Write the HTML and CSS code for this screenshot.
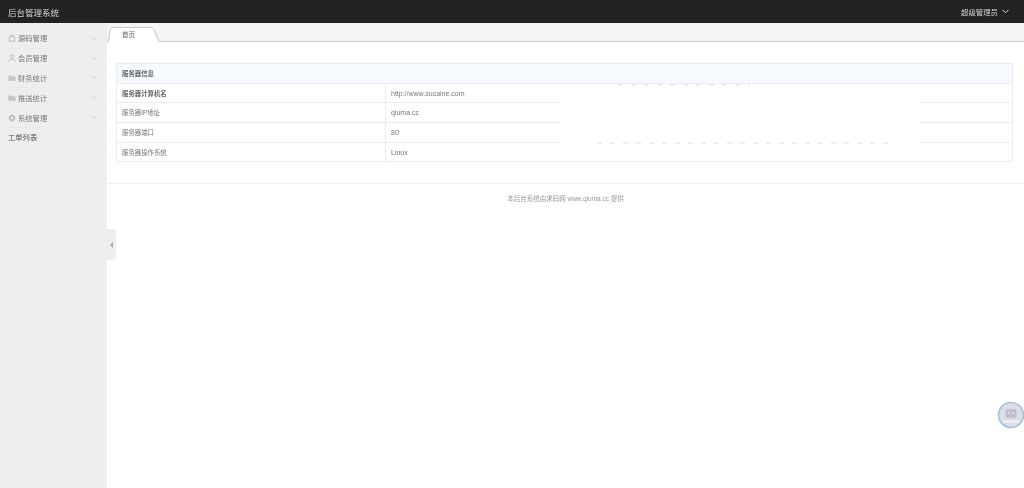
FILE: index.html
```html
<!DOCTYPE html>
<html lang="zh-CN">
<head>
<meta charset="utf-8">
<title>后台管理系统</title>
<link rel="stylesheet" href="styles.css">
</head>
<body>
<header class="topbar">
  <div class="brand">后台管理系统</div>
  <div class="user">超级管理员 <svg class="user-caret" width="7" height="5" viewBox="0 0 7 5"><path d="M.5 .8l3 3 3-3" fill="none" stroke="#ddd"/></svg></div>
</header>
<div class="body">
  <aside class="side">
    <nav class="menu">
      <a class="item"><svg class="ico" viewBox="0 0 10 10"><path d="M1.500 3.500h7v5.500h-7zM3.500 3.500V1.500h3v2" fill="none" stroke="#b4b4b4"/></svg><span class="label">源码管理</span><svg class="chev" viewBox="0 0 9 6"><path d="M1 1l3.500 3.500L8 1" fill="none" stroke="#c8c8c8"/></svg></a>
      <a class="item"><svg class="ico" viewBox="0 0 10 10"><circle cx="5" cy="3" r="2" fill="none" stroke="#b4b4b4"/><path d="M1 9.500c0-2.500 2-3 4-3s4 .5 4 3" fill="none" stroke="#b4b4b4"/></svg><span class="label">会员管理</span><svg class="chev" viewBox="0 0 9 6"><path d="M1 1l3.500 3.500L8 1" fill="none" stroke="#c8c8c8"/></svg></a>
      <a class="item"><svg class="ico" viewBox="0 0 10 10"><path d="M.5 2h3.500l1 1h4.500v5.500h-9z" fill="#c4c4c4"/></svg><span class="label">财务统计</span><svg class="chev" viewBox="0 0 9 6"><path d="M1 1l3.500 3.500L8 1" fill="none" stroke="#c8c8c8"/></svg></a>
      <a class="item"><svg class="ico" viewBox="0 0 10 10"><path d="M.5 2h3.500l1 1h4.500v5.500h-9z" fill="#c4c4c4"/></svg><span class="label">推送统计</span><svg class="chev" viewBox="0 0 9 6"><path d="M1 1l3.500 3.500L8 1" fill="none" stroke="#c8c8c8"/></svg></a>
      <a class="item"><svg class="ico" viewBox="0 0 10 10"><circle cx="5" cy="5" r="2.800" fill="none" stroke="#b4b4b4" stroke-width="1.600"/><path d="M5 .5v1.500M5 8v1.500M.5 5H2M8 5h1.500" stroke="#b4b4b4"/></svg><span class="label">系统管理</span><svg class="chev" viewBox="0 0 9 6"><path d="M1 1l3.500 3.500L8 1" fill="none" stroke="#c8c8c8"/></svg></a>
      <a class="item item-plain"><span class="label">工单列表</span></a>
    </nav>
    <div class="collapse"><span class="collapse-arrow"></span></div>
  </aside>
  <main class="main">
    <div class="tabs">
      <div class="tab">
        <svg class="tab-shape" width="52" height="15" viewBox="0 0 52 15"><path d="M.5 15L2 3.500Q2.500 .5 6 .5H42Q45.500 .5 46.500 3.500L51 15" fill="#fff" stroke="#c8c8c8"/></svg>
        <span class="tab-text">首页</span>
      </div>
    </div>
    <div class="content">
      <table class="info">
        <colgroup><col class="col-k"><col></colgroup>
        <thead>
          <tr><th colspan="2">服务器信息</th></tr>
        </thead>
        <tbody>
          <tr class="strong"><td>服务器计算机名</td><td class="val">http://www.sucaine.com</td></tr>
          <tr><td>服务器IP地址</td><td class="val">qiuma.cc</td></tr>
          <tr><td>服务器端口</td><td class="val">80</td></tr>
          <tr><td>服务器操作系统</td><td class="val">Linux</td></tr>
        </tbody>
      </table>
      <div class="mask"></div>
    </div>
    <footer class="foot">本后台系统由求码网 www.qiuma.cc 提供</footer>
  </main>
</div>
<div class="float-btn">
  <svg width="28" height="28" viewBox="0 0 28 28"><circle cx="14" cy="14" r="12.500" fill="#dcdee6" stroke="#a6c0d8" stroke-width="1.600"/><rect x="8.500" y="8" width="11" height="9" rx="2" fill="#c2c0d0"/><path d="M11 12h2M15 12h2" stroke="#f2f2f2"/><path d="M6 20.500h16" stroke="#f0f0f4" stroke-width="2.500"/></svg>
</div>
</body>
</html>
```
FILE: styles.css
```css
* { box-sizing: border-box; }
html, body { margin: 0; height: 100%; }
body {
  font-family: "Liberation Sans", "Noto Sans CJK SC", sans-serif;
  font-size: 8px;
  color: #666;
  background: #fff;
  overflow: hidden;
}
.topbar {
  height: 23px;
  background: #222;
  display: flex;
  align-items: center;
  justify-content: space-between;
  padding: 0 15px 0 8px;
  filter: blur(.3px);
}
.brand { font-size: 8.500px; color: #d4d4d4; }
.user { font-size: 7.400px; color: #d4d4d4; display: flex; align-items: center; gap: 4px; }
.body { display: flex; height: 465px; filter: blur(.3px); }
.side {
  width: 107px;
  flex: none;
  background: #eee;
  position: relative;
}
.menu { display: flex; flex-direction: column; padding-top: 6px; }
.item {
  height: 19.800px;
  display: flex;
  align-items: center;
  padding: 0 9px 0 8px;
  border-bottom: 1px solid #e9e9e9;
  font-size: 7.300px;
  color: #777;
}
.ico { width: 8px; height: 8px; margin-right: 2px; flex: none; }
.label { flex: 1; }
.chev { width: 8px; height: 5px; flex: none; }
.item-plain { color: #555; }
.collapse {
  position: absolute;
  right: -9px;
  top: 206px;
  width: 9px;
  height: 31px;
  background: #eee;
  border-radius: 0 3px 3px 0;
  display: flex;
  align-items: center;
  justify-content: center;
}
.collapse-arrow {
  width: 0;
  height: 0;
  border: 3px solid transparent;
  border-left: 0;
  border-right: 3px solid #aaa;
}
.main { flex: 1; min-width: 0; display: flex; flex-direction: column; }
.tabs {
  height: 19px;
  background: #f4f4f4;
  border-bottom: 1px solid #ccc;
  display: flex;
  align-items: flex-end;
  padding-left: 1px;
}
.tab {
  position: relative;
  width: 52px;
  height: 15px;
  margin-bottom: -1px;
  line-height: 15px;
  font-size: 6.500px;
  color: #666;
}
.tab-shape { position: absolute; left: 0; top: 0; }
.tab-text { position: relative; margin-left: 14px; }
.content {
  padding: 21px 11px 21px 9px;
  position: relative;
  border-bottom: 1px solid #f0f0f0;
}
.info {
  width: 100%;
  border-collapse: collapse;
  table-layout: fixed;
  font-size: 6.400px;
}
.col-k { width: 269px; }
.info th {
  height: 19.700px;
  padding: 0 5px;
  background: #f4faff;
  text-align: left;
  font-weight: bold;
  color: #666;
  border: 1px solid #ececec;
}
.info td {
  height: 19.700px;
  padding: 0 5px;
  border: 1px solid #ececec;
  color: #777;
}
.info .val { font-size: 7px; }
.strong td:first-child { font-weight: bold; color: #666; }
.mask {
  position: absolute;
  left: 453px;
  top: 42px;
  width: 360px;
  height: 60px;
  background: #fff;
}
.mask::before,
.mask::after {
  content: "";
  position: absolute;
  height: 2px;
  background: repeating-linear-gradient(90deg, #eee 0 5px, transparent 5px 13px);
}
.mask::before { left: 58px; width: 132px; top: 0; }
.mask::after { left: 37px; width: 295px; bottom: 0; }
.foot {
  text-align: center;
  color: #999;
  font-size: 6.500px;
  padding-top: 9px;
}
.float-btn {
  position: absolute;
  left: 997px;
  top: 401px;
  width: 28px;
  height: 28px;
}
```
